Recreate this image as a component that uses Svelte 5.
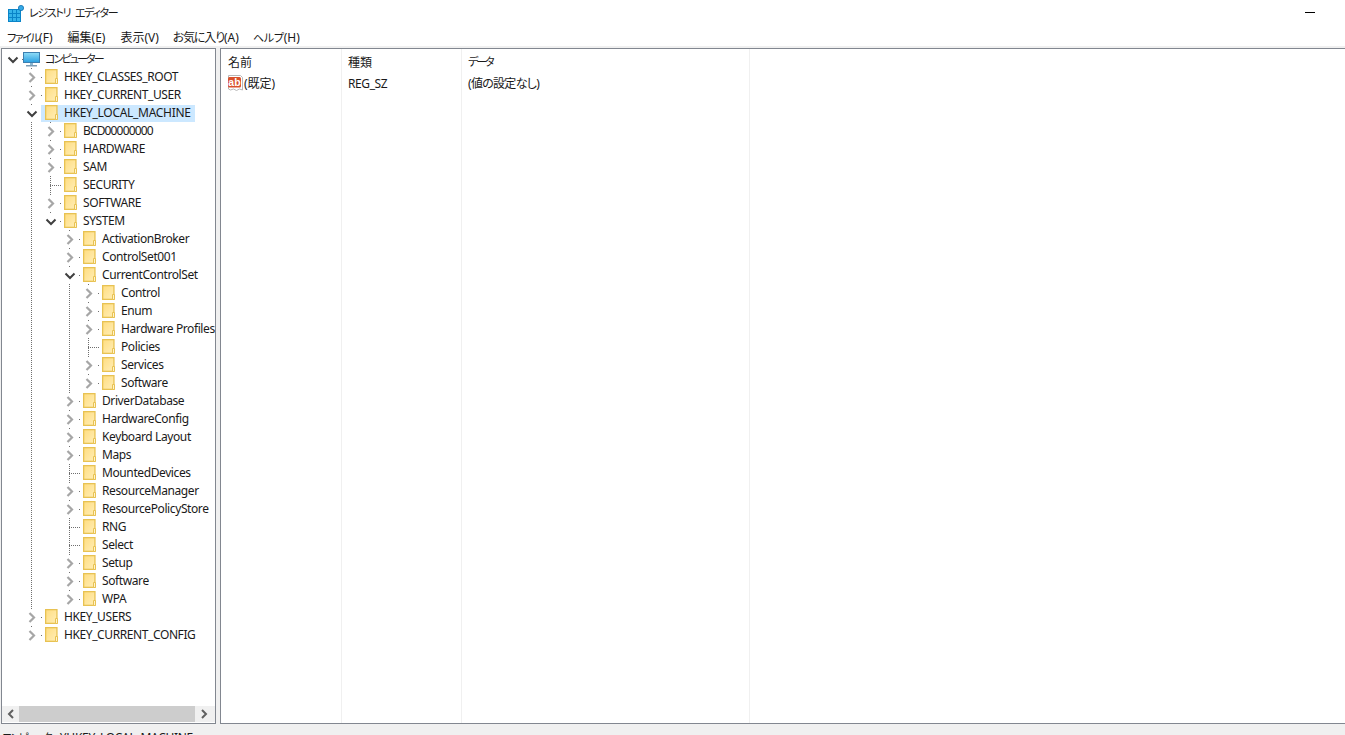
<script>
  const tree = {
    n: 'コンピューター', root: true, open: true, c: [
      { n: 'HKEY_CLASSES_ROOT', k: 1 },
      { n: 'HKEY_CURRENT_USER', k: 1 },
      { n: 'HKEY_LOCAL_MACHINE', open: true, sel: true, c: [
        { n: 'BCD00000000', k: 1 },
        { n: 'HARDWARE', k: 1 },
        { n: 'SAM', k: 1 },
        { n: 'SECURITY' },
        { n: 'SOFTWARE', k: 1 },
        { n: 'SYSTEM', open: true, c: [
          { n: 'ActivationBroker', k: 1 },
          { n: 'ControlSet001', k: 1 },
          { n: 'CurrentControlSet', open: true, c: [
            { n: 'Control', k: 1 },
            { n: 'Enum', k: 1 },
            { n: 'Hardware Profiles', k: 1 },
            { n: 'Policies' },
            { n: 'Services', k: 1 },
            { n: 'Software', k: 1 }
          ] },
          { n: 'DriverDatabase', k: 1 },
          { n: 'HardwareConfig', k: 1 },
          { n: 'Keyboard Layout', k: 1 },
          { n: 'Maps', k: 1 },
          { n: 'MountedDevices' },
          { n: 'ResourceManager', k: 1 },
          { n: 'ResourcePolicyStore', k: 1 },
          { n: 'RNG' },
          { n: 'Select' },
          { n: 'Setup', k: 1 },
          { n: 'Software', k: 1 },
          { n: 'WPA', k: 1 }
        ] }
      ] },
      { n: 'HKEY_USERS', k: 1 },
      { n: 'HKEY_CURRENT_CONFIG', k: 1 }
    ]
  };

  function flatten(node, guides, last, out) {
    out.push({ ...node, guides, last });
    (node.c || []).forEach((ch, i, arr) => {
      flatten(ch, [...guides, !last], i === arr.length - 1, out);
    });
    return out;
  }
  const rows = flatten(tree, [], true, []);
  const menus = [
    { t: 'ファイル', s: '(F)', c: 'kana' },
    { t: '編集', s: '(E)', c: '' },
    { t: '表示', s: '(V)', c: '' },
    { t: 'お気に入り', s: '(A)', c: 'mixed' },
    { t: 'ヘルプ', s: '(H)', c: 'help' }
  ];
</script>

<div class="window">
  <header class="title">
    <svg class="app-icon" width="18" height="18" viewBox="0 0 18 18">
      <rect x="0" y="4" width="13" height="13" fill="#0a84c8"/>
      <g fill="#35b4ea">
        <rect x="1" y="5" width="3" height="3"/><rect x="5" y="5" width="3" height="3"/><rect x="9" y="5" width="3" height="3"/>
        <rect x="1" y="9" width="3" height="3"/><rect x="5" y="9" width="3" height="3"/><rect x="9" y="9" width="3" height="3"/>
        <rect x="1" y="13" width="3" height="3"/><rect x="5" y="13" width="3" height="3"/><rect x="9" y="13" width="3" height="3"/>
      </g>
      <circle cx="13" cy="3" r="2.600" fill="#35a9e6" stroke="#0a6fb0" stroke-width="0.800"/>
    </svg>
    <span class="title-text">レジストリ エディター</span>
    <span class="minimize"></span>
  </header>

  <nav class="menu">
    {#each menus as m}<span class="menu-item"><span class={m.c}>{m.t}</span>{m.s}</span>{/each}
  </nav>

  <main class="panes">
    <section class="tree">
      <div class="rows">
        {#each rows as r}
          <div class="row">
            {#each r.guides as g}<span class="guide" class:on={g}></span>{/each}
            <span class="twisty" class:last={r.last} class:root={r.root}>
              {#if r.k || r.open}
                <span class="chev">
                  {#if r.open}
                    <svg width="12" height="8" viewBox="0 0 12 8"><path d="M1.500 1.500l4.500 4.500 4.500-4.500" fill="none" stroke="#404040" stroke-width="2"/></svg>
                  {:else}
                    <svg width="8" height="11" viewBox="0 0 8 11"><path d="M1.500 1l4.500 4.500-4.500 4.500" fill="none" stroke="#a6a6a6" stroke-width="2.200"/></svg>
                  {/if}
                </span>
              {/if}
            </span>
            <span class="node" class:sel={r.sel}>
              <span class="icon">
                {#if r.root}
                  <svg width="19" height="18" viewBox="0 0 19 18">
                    <defs><linearGradient id="scr" x1="0" y1="0" x2="0" y2="1"><stop offset="0" stop-color="#8fdcf7"/><stop offset="1" stop-color="#2a9fe0"/></linearGradient></defs>
                    <rect x="1.500" y="2.500" width="16" height="10" fill="url(#scr)" stroke="#3c7fb0"/>
                    <rect x="8" y="13" width="3" height="2" fill="#8ab6d0"/>
                    <rect x="4" y="15" width="11" height="1.500" fill="#7c9cb4"/>
                  </svg>
                {:else}
                  <svg class="folder" width="14" height="16" viewBox="0 0 14 16">
                    <defs><linearGradient id="fd" x1="0" y1="0" x2="1" y2="1"><stop offset="0" stop-color="#ffdd80"/><stop offset="1" stop-color="#ffeeb8"/></linearGradient></defs>
                    <rect x="0.650" y="1.650" width="11.300" height="13.700" fill="url(#fd)" stroke="#e8c252" stroke-width="1.300"/>
                    <path d="M10.500 15.500v-5h2v5z" fill="#fff3cd" stroke="#e8c252"/>
                  </svg>
                {/if}
              </span>
              <span class="label" class:jp={r.root} class:digits={/\d{8}/.test(r.n)}>{r.n}</span>
            </span>
          </div>
        {/each}
      </div>
      <div class="hscroll">
        <span class="arrow"><svg width="8" height="10" viewBox="0 0 8 10"><path d="M6 1L2 5l4 4" fill="none" stroke="#606060" stroke-width="2"/></svg></span>
        <span class="thumb"></span>
        <span class="arrow"><svg width="8" height="10" viewBox="0 0 8 10"><path d="M2 1l4 4-4 4" fill="none" stroke="#606060" stroke-width="2"/></svg></span>
      </div>
    </section>

    <section class="list">
      <div class="col c1">
        <div class="head">名前</div>
        <div class="cell">
          <svg class="sz" width="17" height="18" viewBox="0 0 17 18">
            <path d="M1.500 0.500h12l2 2v12.500l-3-1-3 1.500-3-1.500-3 1-2-1z" fill="#fff" stroke="#b8b8b8"/>
            <rect x="1" y="2" width="13" height="10.500" rx="1.500" fill="#d9512c"/>
            <text x="7.500" y="10.500" class="ab">ab</text>
          </svg>
          <span>(既定)</span>
        </div>
      </div>
      <div class="col c2">
        <div class="head type">種類</div>
        <div class="cell latin">REG_SZ</div>
      </div>
      <div class="col c3">
        <div class="head data">データ</div>
        <div class="cell val">(値の設定なし)</div>
      </div>
    </section>
  </main>

  <footer class="status"><span class="jp">コンピューター</span><span class="latin">¥HKEY_LOCAL_MACHINE</span></footer>
</div>

<style>
  :global(body) { margin: 0; background: #fff; }
  .window {
    width: 1345px; height: 735px; overflow: hidden;
    display: flex; flex-direction: column;
    font: 12px/18px "Noto Sans", "Noto Sans CJK JP", sans-serif;
    font-feature-settings: "palt";
    color: #1a1a1a;
  }
  .title { height: 28px; flex: none; display: flex; align-items: center; padding-left: 8px; }
  .app-icon { flex: none; }
  .title-text { margin: -2px 0 0 3px; font-size: 11px; letter-spacing: -1.300px; word-spacing: 3px; }
  .minimize { width: 10px; height: 1px; background: #000; margin-left: auto; margin-right: 30px; margin-top: -4px; }
  .menu { height: 18px; box-sizing: border-box; padding: 1px 0 0 7px; flex: none; display: flex; gap: 14px; }
  .menu-item { white-space: nowrap; }
  .menu-item:nth-child(1), .menu-item:nth-child(2) { margin-right: 1px; }
  .kana { font-size: 11px; letter-spacing: -1.500px; }
  .mixed { letter-spacing: -1.200px; }
  .help { font-size: 11px; letter-spacing: -0.200px; }

  .panes { flex: none; height: 678px; display: flex; background: #f0f0f0; padding: 2px 0 0 1px; box-sizing: border-box; }
  .tree {
    width: 215px; flex: none; box-sizing: border-box; background: #fff;
    border: 1px solid #828790; display: flex; flex-direction: column; overflow: hidden;
  }
  .rows { flex: 1; min-height: 0; padding: 1px 0 0 1px; overflow: hidden; }
  .row { height: 18px; display: flex; white-space: nowrap; }
  .guide, .twisty { width: 19px; flex: none; position: relative; height: 18px; }
  .guide.on, .twisty:not(.root) {
    background: repeating-linear-gradient(to bottom, #6f6f6f 0 1px, transparent 1px 2px) 9px 0 / 1px 100% no-repeat;
  }
  .twisty.last { background-size: 1px 50%; }
  .twisty::after {
    content: ''; position: absolute; left: 9px; top: 9px; width: 12px; height: 1px;
    background: repeating-linear-gradient(to right, #6f6f6f 0 1px, transparent 1px 2px);
  }
  .chev {
    position: absolute; left: 1px; top: 1px; width: 17px; height: 16px; background: #fff; z-index: 1;
    display: flex; align-items: center; justify-content: center; padding-top: 1px; box-sizing: border-box;
  }
  .node { display: flex; height: 18px; padding-right: 4px; position: relative; z-index: 1; }
  .node.sel { background: #cce8ff; height: 17px; margin-top: 1px; }
  .icon { width: 19px; flex: none; height: 18px; display: flex; }
  .folder { margin: 0 0 0 4px; }
  .node.sel .folder { margin-top: -1px; }
  .label { margin-left: 4px; letter-spacing: -0.400px; }
  .label.jp { font-size: 11px; letter-spacing: -1.900px; }
  .label.digits { letter-spacing: -0.850px; }
  .node.sel .label { margin-top: -1px; letter-spacing: -0.300px; }

  .hscroll { height: 16px; flex: none; margin: 0 0 1px; background: #f0f0f0; display: flex; align-items: center; }
  .arrow { width: 17px; flex: none; display: flex; justify-content: center; }
  .thumb { width: 176px; height: 100%; background: #cdcdcd; }

  .list {
    flex: none; width: 1125px; margin-left: 4px; box-sizing: border-box; background: #fff;
    border: 1px solid #828790; border-right: 0; display: flex;
  }
  .col { border-right: 1px solid #f0f0f0; flex: none; box-sizing: border-box; }
  .c1 { width: 121px; }
  .c2 { width: 120px; }
  .c3 { width: 288px; }
  .head { height: 25px; line-height: 25px; padding-left: 7px; padding-top: 1px; box-sizing: border-box; }
  .head.type { padding-left: 6px; }
  .head.data { font-size: 11px; letter-spacing: -2px; padding: 0 0 0 6px; }
  .cell { height: 20px; display: flex; align-items: center; padding-left: 6px; white-space: nowrap; }
  .cell.latin { letter-spacing: -0.400px; }
  .cell.val { letter-spacing: -0.700px; }
  .ab { font: bold 10.500px "Liberation Sans", sans-serif; fill: #fff; text-anchor: middle; }
  .sz { flex: none; }
  .status { flex: none; height: 29px; background: #f0f0f0; padding: 5px 0 0 2px; box-sizing: border-box; white-space: nowrap; }
  .status .jp { font-size: 11px; letter-spacing: -1.900px; }
  .status .latin { letter-spacing: -0.300px; }
</style>
